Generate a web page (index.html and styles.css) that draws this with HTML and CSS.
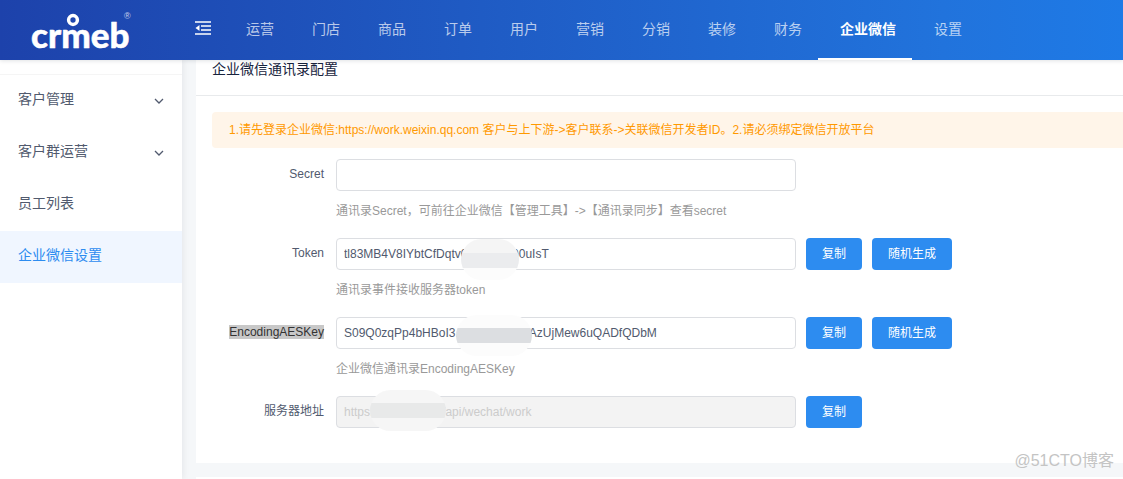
FILE: index.html
```html
<!DOCTYPE html>
<html lang="zh-CN">
<head>
<meta charset="utf-8">
<title>企业微信设置</title>
<link rel="stylesheet" href="styles.css">
</head>
<body>
<header class="topbar">
  <a class="logo" href="#" aria-label="crmeb">
    <svg width="104" height="44" viewBox="0 0 104 44">
      <text class="logo-word" x="1" y="38">crmeb</text>
      <circle class="logo-dot" cx="43" cy="10" r="4.4"/>
      <text class="logo-mark" x="94" y="9">®</text>
    </svg>
  </a>
  <button class="collapse" type="button" aria-label="收起菜单">
    <svg width="16" height="14" viewBox="0 0 16 14" fill="none" stroke="#fff" stroke-width="1.5">
      <path d="M0 1h16M6 5h10M6 9h10M0 13h16"/>
      <path d="M0.500 7L4.500 4v6z" fill="#fff" stroke="none"/>
    </svg>
  </button>
  <nav class="nav">
    <a class="nav-item" href="#">运营</a>
    <a class="nav-item" href="#">门店</a>
    <a class="nav-item" href="#">商品</a>
    <a class="nav-item" href="#">订单</a>
    <a class="nav-item" href="#">用户</a>
    <a class="nav-item" href="#">营销</a>
    <a class="nav-item" href="#">分销</a>
    <a class="nav-item" href="#">装修</a>
    <a class="nav-item" href="#">财务</a>
    <a class="nav-item active" href="#">企业微信</a>
    <a class="nav-item" href="#">设置</a>
  </nav>
</header>
<div class="body">
  <aside class="sidebar">
    <a class="side-item" href="#">客户管理
      <svg class="chevron" width="10" height="6" viewBox="0 0 10 6"><path d="M1 1l4 4 4-4"/></svg></a>
    <a class="side-item" href="#">客户群运营
      <svg class="chevron" width="10" height="6" viewBox="0 0 10 6"><path d="M1 1l4 4 4-4"/></svg></a>
    <a class="side-item" href="#">员工列表</a>
    <a class="side-item current" href="#">企业微信设置</a>
  </aside>
  <main class="main">
    <section class="card">
      <h1 class="card-title">企业微信通讯录配置</h1>
      <form class="form">
        <p class="notice">1.请先登录企业微信:https://work.weixin.qq.com 客户与上下游-&gt;客户联系-&gt;关联微信开发者ID。2.请必须绑定微信开放平台</p>
        <div class="row">
          <label class="label" for="secret">Secret</label>
          <div class="field">
            <div class="control"><input class="input" id="secret" type="text"></div>
            <p class="hint">通讯录Secret，可前往企业微信【管理工具】-&gt;【通讯录同步】查看secret</p>
          </div>
        </div>
        <div class="row">
          <label class="label" for="token">Token</label>
          <div class="field">
            <div class="control">
              <input class="input" id="token" type="text" value="tl83MB4V8IYbtCfDqtv00000ccc00uIsT">
              <span class="mask mask-token"></span>
              <button class="btn" type="button">复制</button>
              <button class="btn" type="button">随机生成</button>
            </div>
            <p class="hint">通讯录事件接收服务器token</p>
          </div>
        </div>
        <div class="row">
          <label class="label" for="aes"><span class="selected">EncodingAESKey</span></label>
          <div class="field">
            <div class="control">
              <input class="input" id="aes" type="text" value="S09Q0zqPp4bHBoI3.m000000000AzUjMew6uQADfQDbM">
              <span class="mask mask-aes"></span>
              <button class="btn" type="button">复制</button>
              <button class="btn" type="button">随机生成</button>
            </div>
            <p class="hint">企业微信通讯录EncodingAESKey</p>
          </div>
        </div>
        <div class="row">
          <label class="label" for="server">服务器地址</label>
          <div class="field">
            <div class="control">
              <input class="input" id="server" type="text" value="https://demo.hosts/api/wechat/work" disabled>
              <span class="mask mask-server"></span>
              <button class="btn" type="button">复制</button>
            </div>
          </div>
        </div>
      </form>
    </section>
    <section class="card"></section>
  </main>
</div>
<div class="watermark">@51CTO博客</div>
</body>
</html>
```
FILE: styles.css
```css
* { box-sizing: border-box; }
body {
  margin: 0;
  height: 100vh;
  overflow: hidden;
  display: flex;
  flex-direction: column;
  background: #f5f7f9;
  color: #515a6e;
  font: 12px/18px "Liberation Sans", "Noto Sans CJK SC", sans-serif;
}
a { text-decoration: none; color: inherit; }
p, h1 { margin: 0; }
button { border: 0; font: inherit; cursor: pointer; }

.topbar {
  position: relative;
  z-index: 2;
  flex: none;
  display: flex;
  height: 60px;
  background: linear-gradient(90deg, #1d42ab 0%, #2173dc 84%, #1e7ae6 100%);
  box-shadow: 0 1px 4px rgba(0, 21, 41, .12);
}
.logo { width: 182px; padding: 10px 0 0 30px; }
.logo svg { display: block; }
.logo-word {
  font: 900 35px Lato, sans-serif;
  fill: #fff;
  stroke: #fff;
  stroke-width: 0.5px;
  stroke-linejoin: round;
}
.logo-dot { fill: #1e46ae; stroke: #fff; stroke-width: 3.5px; }
.logo-mark { font: 9px "Liberation Sans", sans-serif; fill: #c5d0ec; }
.collapse {
  display: flex;
  align-items: center;
  width: 42px;
  padding: 0 0 4px 13px;
  background: none;
}
.nav { display: flex; }
.nav-item {
  padding: 0 16px 0 22px;
  border-bottom: 2px solid transparent;
  color: rgba(255, 255, 255, .7);
  font-size: 14px;
  line-height: 58px;
}
.nav-item.active { color: #fff; font-weight: 700; border-color: #fff; }

.body { flex: 1; display: flex; min-height: 0; }
.sidebar {
  flex: none;
  width: 182px;
  margin-right: 14px;
  padding-top: 14px;
  background: #fff;
  box-shadow: 2px 0 6px rgba(0, 21, 41, .06);
}
.side-item {
  display: flex;
  justify-content: space-between;
  align-items: center;
  padding: 12px 18px 16px;
  font-size: 14px;
  line-height: 24px;
}
.side-item:first-child { border-top: 1px solid #f5f5f5; }
.side-item.current { background: #f0f6ff; color: #2d8cf0; }
.chevron { margin-top: 4px; fill: none; stroke: #515a6e; stroke-width: 1.3; }

.main { flex: 1; min-width: 0; display: flex; flex-direction: column; gap: 14px; }
.card { flex: none; background: #fff; }
.card:last-child { flex: 1; }
.card-title {
  padding: 0 16px 16px;
  border-bottom: 1px solid #e8eaec;
  color: #17233d;
  font-size: 14px;
  font-weight: 400;
  line-height: 19px;
}
.form { padding: 16px 0 35px 16px; }
.notice {
  margin-bottom: 11px;
  padding: 9px 17px;
  border-radius: 4px 0 0 4px;
  background: #fff5e9;
  color: #ff9900;
}
.row { display: flex; gap: 12px; margin-bottom: 18px; }
.row:last-child { margin-bottom: 0; }
.label { flex: none; width: 112px; padding-top: 6px; text-align: right; }
.selected { background: #c8c8c8; color: #333; }
.field { flex: 1; }
.control { position: relative; display: flex; gap: 10px; }
.input {
  width: 460px;
  height: 32px;
  padding: 0 7px;
  border: 1px solid #dcdee2;
  border-radius: 4px;
  background: #fff;
  color: #515a6e;
  font: inherit;
}
.input:disabled { background: #f3f3f3; color: #ccc; }
.hint { padding-top: 11px; color: #999; }
.btn { height: 32px; padding: 0 16px; border-radius: 4px; background: #2d8cf0; color: #fff; }

.mask {
  position: absolute;
  height: 41px;
  border-radius: 21px;
}
.mask-token {
  top: 1px;
  left: 125px;
  width: 58px;
  background: linear-gradient(#f5f5f5 0 14px, #ebecee 14px 29px, #fcfcfc 29px);
}
.mask-aes {
  top: -2px;
  left: 120px;
  width: 76px;
  background: linear-gradient(#fcfcfc 0 13px, #dcdee1 13px 28px, #fcfcfc 28px);
}
.mask-server {
  top: -6px;
  left: 34px;
  width: 76px;
  background: linear-gradient(#f6f6f6 0 13px, #e8e9e9 13px 28px, #f6f6f6 28px);
}
.watermark {
  position: absolute;
  right: 9px;
  bottom: 6px;
  z-index: 3;
  color: #c4c4c4;
  font-size: 16px;
  line-height: 24px;
}
```
